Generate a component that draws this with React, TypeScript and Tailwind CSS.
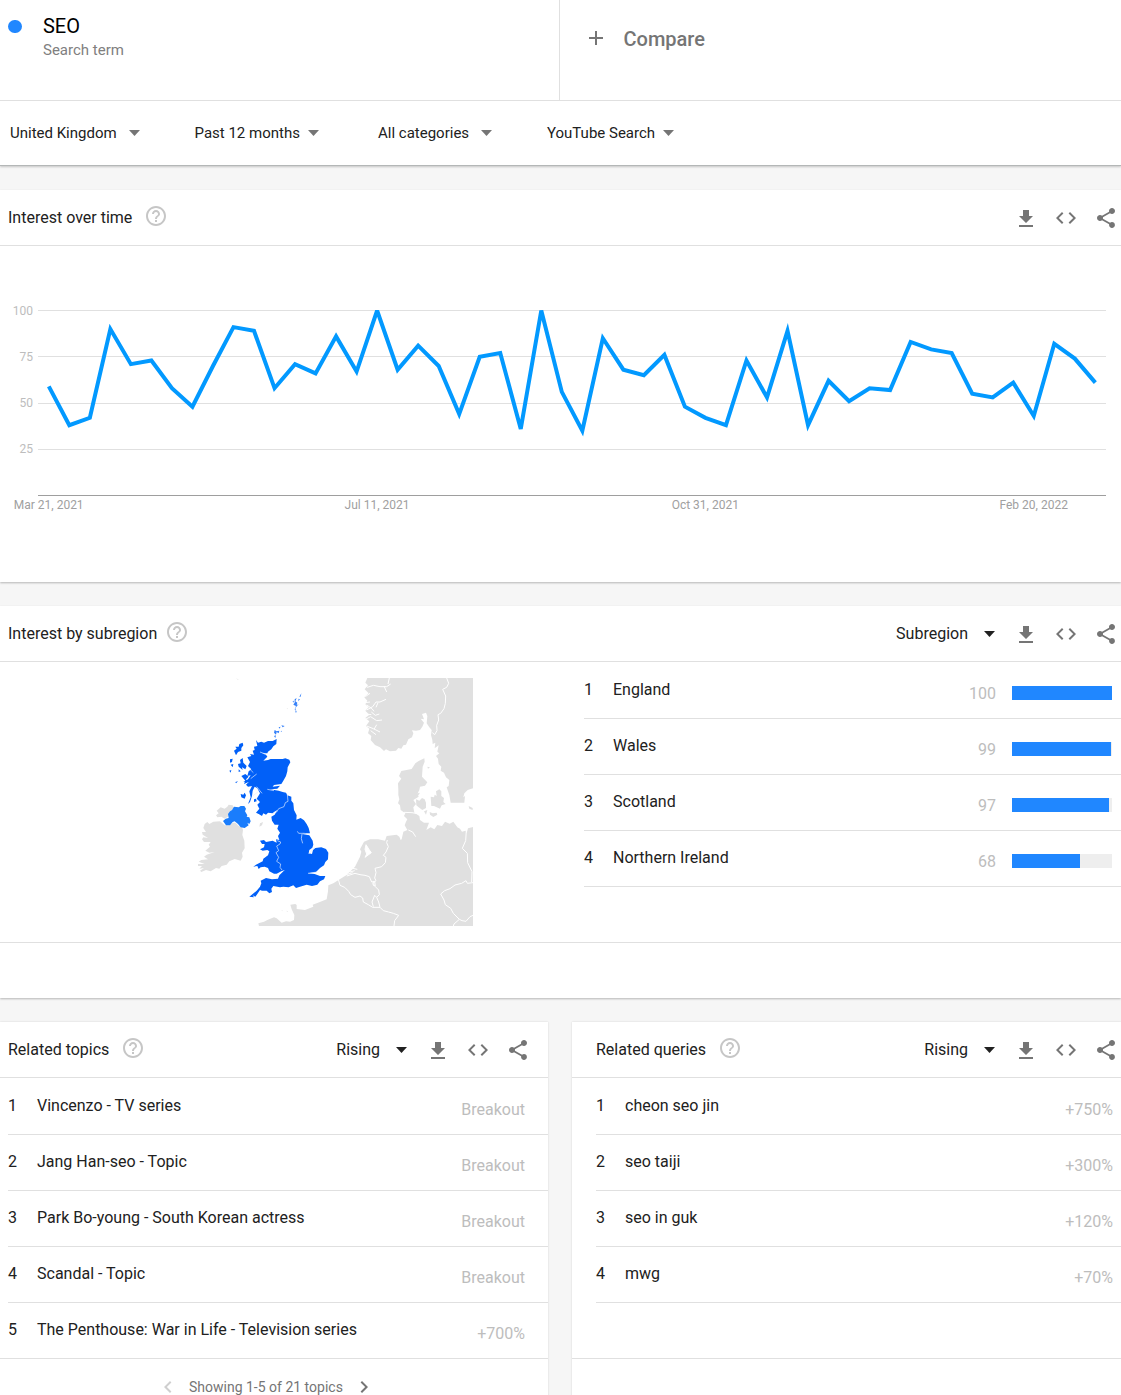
import {
  MdAdd,
  MdChevronLeft,
  MdChevronRight,
  MdCode,
  MdFileDownload,
  MdHelpOutline,
  MdShare,
} from "react-icons/md";

const filters = [
  { label: "United Kingdom", width: "w-[184.5px]", gap: "gap-3" },
  { label: "Past 12 months", width: "w-[183.5px]", gap: "gap-2" },
  { label: "All categories", width: "w-[169px]", gap: "gap-[11.5px]" },
  { label: "YouTube Search", width: "w-[180px]", gap: "gap-[7.5px]" },
];

const interest = [
  59, 38, 42, 90, 71, 73, 58, 48, 70, 91, 89, 58, 71, 66, 86, 67, 100, 68, 81,
  70, 44, 75, 77, 36, 100, 56, 35, 85, 68, 65, 76, 48, 42, 38, 73, 53, 89, 38,
  62, 51, 58, 57, 83, 79, 77, 55, 53, 61, 43, 82, 74, 61,
];

const regions = [
  { name: "England", value: 100 },
  { name: "Wales", value: 99 },
  { name: "Scotland", value: 97 },
  { name: "Northern Ireland", value: 68 },
];

const topics = [
  { name: "Vincenzo - TV series", value: "Breakout" },
  { name: "Jang Han-seo - Topic", value: "Breakout" },
  { name: "Park Bo-young - South Korean actress", value: "Breakout" },
  { name: "Scandal - Topic", value: "Breakout" },
  { name: "The Penthouse: War in Life - Television series", value: "+700%" },
];

const queries = [
  { name: "cheon seo jin", value: "+750%" },
  { name: "seo taiji", value: "+300%" },
  { name: "seo in guk", value: "+120%" },
  { name: "mwg", value: "+70%" },
];

const Caret = ({ className = "" }) => {
  return (
    <svg
      className={`h-[6px] w-[11px] ${className}`}
      viewBox="0 0 11 6"
      fill="currentColor"
    >
      <path d="M0 0H11L5.5 6Z" />
    </svg>
  );
};

const CardHeader = ({ title, select = "", helpGap = "ml-3", className = "" }) => {
  return (
    <div
      className={`flex h-14 items-center border-b border-[#e0e0e0] ${className}`}
    >
      <h2 className="text-base leading-6">{title}</h2>
      <MdHelpOutline
        className={`size-6 -mt-[3px] text-[#c6c6c6] ${helpGap}`}
      />
      <div className="ml-auto flex items-center">
        {select && (
          <button className="mr-[19px] flex items-center gap-4">
            {select}
            <Caret />
          </button>
        )}
        <div className="flex gap-4 text-[#757575]">
          <MdFileDownload className="size-6 translate-y-px" />
          <MdCode className="size-6" />
          <MdShare className="size-6" />
        </div>
      </div>
    </div>
  );
};

const LineChart = () => {
  const points = interest
    .map((v, i) => `${48.8 + i * 20.52},${249.5 - v * 1.85}`)
    .join(" ");

  return (
    <svg className="block w-full h-[336px]" viewBox="0 0 1121 336">
      <clipPath id="plot">
        <rect x="38" y="64" width="1068" height="186" />
      </clipPath>
      {[100, 75, 50, 25].map((v, i) => (
        <g key={v}>
          <rect
            x="38"
            y={[64, 110, 157, 203][i]}
            width="1068"
            height="1"
            fill="#e0e0e0"
          />
          <text
            x="33"
            y={[69, 115, 161, 207][i]}
            fontSize="12"
            textAnchor="end"
            fill="#bdbdbd"
          >
            {v}
          </text>
        </g>
      ))}
      <rect x="38" y="249" width="1068" height="1" fill="#9e9e9e" />
      <polyline
        points={points}
        fill="none"
        stroke="#0299ff"
        strokeWidth="4"
        clipPath="url(#plot)"
      />
      <g fontSize="12" textAnchor="middle" fill="#a0a0a0">
        <text x="48.7" y="263">Mar 21, 2021</text>
        <text x="377" y="263">Jul 11, 2021</text>
        <text x="705.3" y="263">Oct 31, 2021</text>
        <text x="1033.7" y="263">Feb 20, 2022</text>
      </g>
    </svg>
  );
};

const RegionMap = () => {
  return (
    <svg
      className="ml-[198px] mt-4 h-[248px] w-[275px]"
      viewBox="54 24 825 744"
    >
      {/* Mainland Europe and Scandinavia */}
      <g fill="#e0e0e0">
        <path d="M562 24L556 38L564 46L554 58L566 70L553 82L562 92L556 103L566 112L556 122L568 134L556 144L568 154L558 168L568 176L564 190L574 198L572 210L585 225L600 232L612 243L618 238L630 244L648 242L655 234L664 236L670 226L678 224L685 208L696 202L700 190L696 181L708 182L720 180L727 170L732 158L722 146L732 148L726 132L738 128L742 138L740 160L748 172L755 180L753 195L757 210L758 222L766 218L764 235L776 226L772 245L778 250L768 258L774 266L776 282L784 290L782 302L792 308L798 322L808 330L806 348L800 352L808 375L812 398H853L855 378L850 382L853 370L863 360L879 355V24Z" />
        <path d="M655 360L654 340L664 326L657 318L664 303L695 297L706 280L716 273L733 265L734 275L728 290L726 320L742 337L735 347L720 350L718 360L712 372L716 380L700 390L708 402L700 412L703 428L718 438L720 450L732 458L747 458L739 480L752 472L763 478L772 465L786 468L795 455L809 461L820 455L832 472L840 476L846 485L857 482L860 490L864 475L879 471V768H237L235 760L252 755L262 750L282 742L290 745L305 758L318 754L330 755L342 750L343 735L335 718L331 704L346 702L350 705L350 717L375 720L400 710L398 704L412 699L440 688L444 664L445 646L460 640L495 618L510 605L525 590L540 560L544 545L540 538L552 515L570 508L595 508L615 512L620 498L650 494L658 500L662 510L665 508L670 485L682 480L674 466L678 455L682 448L672 438L676 430L662 420L660 406L654 400L658 388L655 375Z" />
        <path d="M708 388L718 392L726 384L734 388L738 398L738 414L727 420L716 412L709 406Z" />
        <path d="M752 380L762 382L764 374L770 378L768 364L778 358L784 364L784 378L792 384L790 396L797 402L785 406L780 416L762 408L754 408Z" />
        <path d="M749 426L758 430L770 428L772 434L760 441L750 434ZM732 424L742 420L738 434ZM866 408L878 414V420L868 416ZM742 290L750 292L744 296ZM704 372L720 368L712 380Z" />
      </g>

      {/* Water that runs into the land */}
      <g fill="#fff" stroke="#fff" strokeWidth="3" strokeLinejoin="round">
        <path d="M555 538L558 524L568 540L574 548L555 562L560 552Z" />
        <path
          fill="none"
          strokeWidth="3"
          d="M553 38L562 52L580 46L600 50L620 50L632 42M612 48L620 66M624 42L628 24M556 80L570 70M560 120L578 110L588 96L600 96L618 88M588 112L594 98M560 105L576 116L582 124M556 148L572 140L590 152L606 150M574 126L586 136L598 132M560 168L580 176L600 186M582 178L590 164M572 182L588 194M554 98L570 96M556 132L574 134M685 480L698 486L707 500M504 592L532 598M510 606L524 602M495 615L518 608"
        />
      </g>

      {/* Borders */}
      <path
        fill="none"
        stroke="#fff"
        strokeWidth="3"
        d="M800 24L806 40L800 52L788 58L797 78L796 100L792 116L782 130L774 134L776 150L770 166L771 182L764 194L757 188M672 427L696 428L718 432M622 510L620 518L625 530L618 546L610 556L618 562L616 578L605 590L585 595L588 608L584 624L588 632L578 640M500 618L525 610L540 614L555 616L568 620L575 636L584 634L586 650L596 660L598 674L590 682L596 696L600 712M475 628L480 646L494 652L506 664L512 674L525 682L540 678L548 684L550 696L565 704L578 712L600 712L610 722L626 726L640 730L656 736L644 752L642 768M580 710L576 696L584 676L590 682M578 638L584 648L578 644M859 482L857 512L847 535L862 550L863 578L876 605L875 636M879 638L862 640L858 632L845 640L825 645L810 656L794 662L782 672L792 690L796 704L812 715L820 730L838 748L846 752L858 754L870 740L879 736M838 748L822 762L820 768"
      />

      {/* Ireland and the Isle of Man */}
      <g fill="#e0e0e0">
        <path d="M74 462L82 456L88 462L100 455L120 454L134 466L150 466L158 458L166 458L176 468L186 472L189 480L187 495L193 512L194 535L186 548L188 560L182 572L164 567L148 574L140 584L125 588L118 596L108 594L92 604L78 600L64 606L60 602L72 594L58 596L66 588L52 588L54 582L74 582L56 575L64 570L84 568L72 560L80 554L104 546L88 548L76 542L90 530L86 524L92 516L72 516L66 508L70 502L84 504L68 494L66 486L78 486L70 474Z" />
        <path d="M108 436L116 430L110 422L122 412L134 416L142 410L146 404L158 406L162 414L150 424L144 440L134 446L124 440L112 442Z" />
        <path d="M238 470L240 460L249 456L246 466Z" />
        <path d="M168 24L176 29L174 30ZM320 114L324 116L322 118ZM305 720L308 722L306 724ZM320 722L324 724L321 726Z" />
      </g>

      <path
        fill="#1a7dfc"
        d="M129 453L137 446L146 444L144 432L150 424L156 420L162 410L176 412L182 408L193 408L198 416L195 424L202 436L200 440L208 442L212 454L208 462L202 458L206 466L194 474L182 472L174 462L164 454L158 456L150 466L138 466Z"
      />

      {/* Great Britain */}
      <g fill="#0160f8">
        <path d="M228 210L234 218L244 215L252 218L264 213L278 213L290 207L289 222L280 229L274 238L264 245L262 250L246 250L258 254L262 260L250 272L264 270L272 267L292 267L308 267L316 265L328 269L331 277L323 292L322 304L318 318L310 332L304 342L282 345L278 350L300 347L292 356L270 358L296 362L308 366L318 368L322 376L334 380L334 392L340 400L342 420L350 436L349 449L362 444L372 451L380 462L386 474L390 490L378 490L366 492L388 496L398 512L400 524L397 533L388 540L386 550L396 552L399 540L406 534L424 532L438 537L445 548L444 568L436 576L432 586L420 594L408 606L384 610L404 612L420 618L436 618L432 628L420 634L412 644L396 648L380 644L360 650L348 654L340 646L326 652L310 650L300 652L280 648L274 656L276 666L268 670L260 662L246 662L240 660L232 672L226 680L218 676L222 682L208 680L218 672L230 662L240 650L244 640L242 632L258 624L276 628L294 626L298 616L314 600L304 604L290 611L282 611L268 604L264 594L254 590L242 592L236 597L232 588L220 590L228 584L248 574L250 566L264 556L268 544L262 540L248 542L240 538L252 532L254 522L246 522L240 512L252 510L258 516L278 512L290 518L288 508L298 510L294 498L300 488L292 476L296 464L284 464L276 452L274 440L284 434L292 420L282 426L278 430L264 428L258 434L250 430L246 438L236 432L228 428L238 416L232 404L240 396L230 386L240 370L232 355L224 350L218 362L216 378L210 396L204 402L212 382L208 364L216 348L204 350L198 344L206 336L190 336L204 328L212 316L202 318L206 304L214 298L204 288L210 276L202 262L214 258L210 252L222 254L218 242L224 240L222 230L232 228Z" />
        <path d="M162 242L170 236L166 230L176 230L178 222L188 218L190 226L184 234L184 242L174 246L168 256ZM150 268L158 266L156 276L150 278ZM152 284L160 282L158 292ZM148 302L154 300L152 308ZM174 282L182 280L180 270L188 264L190 278L200 288L196 298L186 292L188 300L176 290ZM184 318L196 312L206 320L198 328L206 336L192 342L196 332ZM166 336L174 334L168 340ZM182 372L190 374L194 368L198 376L194 386L184 382ZM222 388L228 386L230 394L222 396ZM176 298L182 304L176 306Z" />
        <path
          opacity=".8"
          d="M284 180L290 184L298 182L296 190L290 186L288 194L282 188ZM282 198L288 196L286 204ZM296 172L302 170L298 176ZM304 166L314 168L308 172ZM302 184L306 182L304 186ZM338 94L342 92L340 98ZM344 88L350 84L346 94L352 98L350 106L356 102L346 114L348 124L344 118L348 108L340 104L344 98ZM358 80L364 70L362 80ZM356 86L360 88L354 94ZM346 124L350 122L348 130Z"
        />
      </g>
      <path
        fill="none"
        stroke="#e4eeff"
        strokeWidth="2"
        d="M322 372L324 394L316 398L312 410L296 416L290 426L276 432M292 512L302 516L300 522L290 528L296 542L288 548L296 562L290 574L302 582L300 592L306 600M374 490L356 490L352 484M366 492L364 506L368 520M386 552L404 532M384 610L412 606M240 246L256 252M206 294L220 308M212 326L230 312M230 350L246 370M218 378L236 364M262 358L282 362"
      />
    </svg>
  );
};

const ListRow = ({ index, name, value, className = "" }) => {
  return (
    <div
      className={`flex h-14 items-center border-b border-[#e0e0e0] ${className}`}
    >
      <span className="w-[29px] pb-[2px]">{index}</span>
      <span className="pb-[2px]">{name}</span>
      <span className="ml-auto pt-[7px] text-[#bdbdbd]">{value}</span>
    </div>
  );
};

export default function App() {
  return (
    <div className="flex h-[1395px] w-[1121px] flex-col gap-6 overflow-hidden bg-[#f6f6f6] font-['Roboto',sans-serif] text-base text-[#212121]">
      {/* Search term and filters */}
      <div className="h-[166px] shrink-0 border-b border-[#b4b7b7] bg-white shadow-[0_1px_2px_rgba(0,0,0,0.2)]">
        <div className="flex h-[101px] border-b border-[#e0e0e0]">
          <div className="flex w-[560px] border-r border-[#e0e0e0] pl-[8.4px]">
            <div className="mt-[19.5px] size-[13.8px] rounded-full bg-[#2087ff]"></div>
            <div className="ml-[20.8px] mt-[14px]">
              <p className="text-[20px] leading-6 text-black">SEO</p>
              <p className="text-[15px] leading-6 text-[#808080]">
                Search term
              </p>
            </div>
          </div>
          <button className="flex h-[78px] items-center pl-6 text-[#757575]">
            <MdAdd className="size-6 -mt-[2px]" />
            <span className="ml-[15.5px] text-[20px] font-medium">Compare</span>
          </button>
        </div>
        <div className="flex h-16 items-center pl-[10px] text-[15px]">
          {filters.map((f) => (
            <button
              key={f.label}
              className={`flex items-center ${f.width} ${f.gap}`}
            >
              {f.label}
              <Caret className="text-[#757575]" />
            </button>
          ))}
        </div>
      </div>

      {/* Interest over time */}
      <div className="h-[392px] shrink-0 bg-white shadow-[0_1px_2px_rgba(0,0,0,0.26)]">
        <CardHeader title="Interest over time" className="pl-2 pr-[3px]" />
        <LineChart />
      </div>

      {/* Interest by subregion */}
      <div className="h-[392px] shrink-0 bg-white shadow-[0_1px_2px_rgba(0,0,0,0.26)]">
        <CardHeader
          title="Interest by subregion"
          select="Subregion"
          helpGap="ml-2"
          className="pl-2 pr-[3px]"
        />
        <div className="flex h-[281px] border-b border-[#e0e0e0]">
          <div className="w-[584px]">
            <RegionMap />
          </div>
          <div className="flex-1 pt-px">
            {regions.map((r, i) => (
              <div
                key={r.name}
                className="flex h-14 items-center border-b border-[#e0e0e0] pr-[9px]"
              >
                <span className="w-[29px] pb-[2px]">{i + 1}</span>
                <span className="pb-[2px]">{r.name}</span>
                <span className="ml-auto mr-4 pt-[7px] text-[#bdbdbd]">
                  {r.value}
                </span>
                <div className="mt-[5px] h-[14px] w-[100px] bg-[#eeeeee]">
                  <div
                    className="h-full bg-[#2087ff]"
                    style={{ width: `${r.value}%` }}
                  ></div>
                </div>
              </div>
            ))}
          </div>
        </div>
      </div>

      {/* Related topics and queries */}
      <div className="flex h-[400px] shrink-0 gap-6">
        <div className="w-[548px] bg-white shadow-[0_0_2px_rgba(0,0,0,0.14)]">
          <CardHeader
            title="Related topics"
            select="Rising"
            className="pl-2 pr-[18px]"
          />
          <div className="ml-2 pt-px">
            {topics.map((t, i) => (
              <ListRow
                key={t.name}
                index={i + 1}
                name={t.name}
                value={t.value}
                className={
                  i === topics.length - 1 ? "-ml-2 pl-2 pr-[23px]" : "pr-[23px]"
                }
              />
            ))}
          </div>
          <div className="flex h-14 items-center pl-[156px] text-sm text-[#757575]">
            <MdChevronLeft className="size-6 text-[#cfcfcf]" />
            <span className="mx-[9px]">Showing 1-5 of 21 topics</span>
            <MdChevronRight className="size-6" />
          </div>
        </div>
        <div className="flex-1 bg-white shadow-[0_0_2px_rgba(0,0,0,0.14)]">
          <CardHeader
            title="Related queries"
            select="Rising"
            className="pl-6 pr-[3px]"
          />
          <div className="h-[281px] border-b border-[#e0e0e0] pl-6 pt-px">
            {queries.map((q, i) => (
              <ListRow
                key={q.name}
                index={i + 1}
                name={q.name}
                value={q.value}
                className="pr-2"
              />
            ))}
          </div>
        </div>
      </div>
    </div>
  );
}
